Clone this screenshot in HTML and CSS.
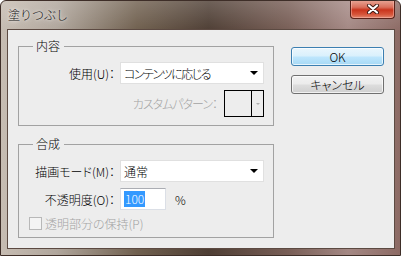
FILE: index.html
```html
<!DOCTYPE html>
<html lang="ja">

<head>
    <meta charset="UTF-8">
    <title>塗りつぶし</title>
    <link rel="stylesheet" href="styles.css">
</head>

<body>

    <div class="window">
        <div class="titlebar">
            <span class="title">塗りつぶし</span>
            <div class="close">
                <svg width="14" height="10" viewBox="0 0 14 10">
                    <path d="M3 1.5 L11 8.5 M11 1.5 L3 8.5" stroke="#3b1812" stroke-width="4" stroke-linecap="round" />
                    <path d="M3 1.5 L11 8.5 M11 1.5 L3 8.5" stroke="#fff" stroke-width="2.2" stroke-linecap="round" />
                </svg>
            </div>
        </div>

        <div class="frame">
            <div class="client">
                <div class="groups">
                    <fieldset class="group group-content">
                        <legend>内容</legend>
                        <div class="row">
                            <span class="label">使用(U)：</span>
                            <div class="select">
                                <span class="narrow">コンテンツに応じる</span>
                                <i class="arrow"></i>
                            </div>
                        </div>
                        <div class="row row-pattern">
                            <span class="label-free disabled">カスタムパターン：</span>
                            <div class="swatch">
                                <div class="swatch-color"></div>
                                <div class="swatch-drop"><i class="arrow arrow-gray"></i></div>
                            </div>
                        </div>
                    </fieldset>

                    <fieldset class="group group-blend">
                        <legend>合成</legend>
                        <div class="row">
                            <span class="label">描画モード(M)：</span>
                            <div class="select">
                                <span>通常</span>
                                <i class="arrow"></i>
                            </div>
                        </div>
                        <div class="row">
                            <span class="label">不透明度(O)：</span>
                            <div class="textbox"><span class="selected">100</span></div>
                            <span class="unit">%</span>
                        </div>
                        <div class="row row-check">
                            <span class="checkbox"></span>
                            <span class="disabled">透明部分の保持(P)</span>
                        </div>
                    </fieldset>
                </div>

                <div class="buttons">
                    <div class="btn btn-default">OK</div>
                    <div class="btn">キャンセル</div>
                </div>
            </div>
        </div>
    </div>

</body>

</html>
```

FILE: styles.css
```css
body {
    margin: 0;
    font-family: "Noto Sans CJK JP", "Liberation Sans", sans-serif;
    font-size: 12px;
    font-weight: 300;
    font-feature-settings: "palt";
    color: #000;
}

/* ---- window frame ---- */
.window {
    width: 401px;
    height: 256px;
    box-sizing: border-box;
    border: 1px solid #3e2e28;
    border-radius: 6px 6px 0 0;
    background:
        linear-gradient(180deg, rgba(255, 255, 255, 0.18) 0%, rgba(255, 255, 255, 0) 12%),
        linear-gradient(90deg, #c6bcb2 0%, #b0a69c 14%, #70604f 34%, #4e3e34 52%, #785e56 72%, #a48884 87%, #8c6a64 100%);
    display: flex;
    flex-direction: column;
    overflow: hidden;
}

.titlebar {
    height: 28px;
    display: flex;
    align-items: flex-start;
    flex-shrink: 0;
}

.title {
    padding: 6px 0 0 7px;
    line-height: 15px;
    font-size: 12px;
    font-feature-settings: normal;
    color: #111;
    text-shadow: 0 0 6px rgba(255, 255, 255, 0.9), 0 0 3px rgba(255, 255, 255, 0.9);
}

.close {
    margin-left: auto;
    margin-right: 5px;
    margin-top: -1px;
    width: 45px;
    height: 19px;
    box-sizing: border-box;
    border: 1px solid #5a2219;
    border-top: none;
    border-radius: 0 0 4px 4px;
    background: linear-gradient(180deg, #e9a898 0%, #d9705c 40%, #c9341c 55%, #d6553a 80%, #e0876e 100%);
    box-shadow: inset 0 0 0 1px rgba(255, 200, 190, 0.45);
    display: flex;
    align-items: center;
    justify-content: center;
}

.frame {
    flex: 1;
    padding: 0 5px 6px 6px;
    display: flex;
}

.client {
    flex: 1;
    background: #ededed;
    border: 1px solid #5c4a42;
    display: flex;
}

/* ---- groups ---- */
.groups {
    padding: 9px 0 0 10px;
    display: flex;
    flex-direction: column;
    gap: 11px;
}

.group {
    width: 256px;
    box-sizing: border-box;
    margin: 0;
    padding: 0 9px 0 0;
    border: 1px solid #a2a2a2;
    min-width: 0;
}

.group-content {
    height: 87px;
}

.group-blend {
    height: 101px;
}

.group legend {
    margin-left: 14px;
    padding: 0 4px 0 3px;
    line-height: 14px;
}

.row {
    display: flex;
    align-items: center;
    height: 22px;
    margin-top: 6px;
}

.group .row:first-of-type {
    margin-top: 9px;
}

.label {
    width: 96px;
    margin-right: 5px;
    text-align: right;
    white-space: nowrap;
}

.disabled {
    color: #a3a3a3;
}

.narrow {
    letter-spacing: -1.5px;
}

.select {
    width: 144px;
    height: 22px;
    box-sizing: border-box;
    background: #fff;
    border: 1px solid #e0e0e0;
    padding: 0 5px 0 3px;
    display: flex;
    align-items: center;
    justify-content: space-between;
}

.arrow {
    width: 0;
    height: 0;
    border-left: 4px solid transparent;
    border-right: 4px solid transparent;
    border-top: 4px solid #000;
}

.arrow-gray {
    border-left-width: 2px;
    border-right-width: 2px;
    border-top: 2px solid #b0b0b0;
}

/* custom pattern */
.row-pattern {
    height: 27px;
    justify-content: flex-end;
}

.label-free {
    margin-right: 7px;
    letter-spacing: -1px;
    white-space: nowrap;
}

.swatch {
    width: 40px;
    height: 27px;
    box-sizing: border-box;
    border: 1px solid #000;
    display: flex;
}

.swatch-color {
    width: 26px;
    border-right: 1px solid #000;
}

.swatch-drop {
    flex: 1;
    display: flex;
    align-items: center;
    justify-content: center;
}

/* opacity */
.textbox {
    width: 46px;
    height: 22px;
    box-sizing: border-box;
    background: #fff;
    border: 1px solid #dbdfe6;
    border-top-color: #abadb3;
    padding: 0 0 0 3px;
    display: flex;
    align-items: center;
}

.selected {
    background: #3399ff;
    color: #fff;
    line-height: 16px;
    padding: 0 1px;
}

.unit {
    margin-left: 9px;
}

.row-check {
    height: 14px;
    padding-left: 10px;
    gap: 3px;
}

.checkbox {
    width: 13px;
    height: 13px;
    box-sizing: border-box;
    border: 1px solid #b8b8b8;
    background: #f4f4f4;
}

/* ---- buttons ---- */
.buttons {
    padding: 17px 0 0 17px;
    display: flex;
    flex-direction: column;
    gap: 9px;
}

.btn {
    width: 93px;
    height: 19px;
    box-sizing: border-box;
    border: 1px solid #707070;
    border-radius: 3px;
    background: linear-gradient(180deg, #f2f2f2 0%, #ebebeb 48%, #dddddd 52%, #cfcfcf 100%);
    box-shadow: inset 0 0 0 1px rgba(255, 255, 255, 0.7);
    display: flex;
    align-items: center;
    justify-content: center;
    line-height: 14px;
}

.btn-default {
    border-color: #3c7fb1;
    background: linear-gradient(180deg, #eaf6fd 0%, #d9f0fc 48%, #bee6fd 52%, #a7d9f5 100%);
}
```
